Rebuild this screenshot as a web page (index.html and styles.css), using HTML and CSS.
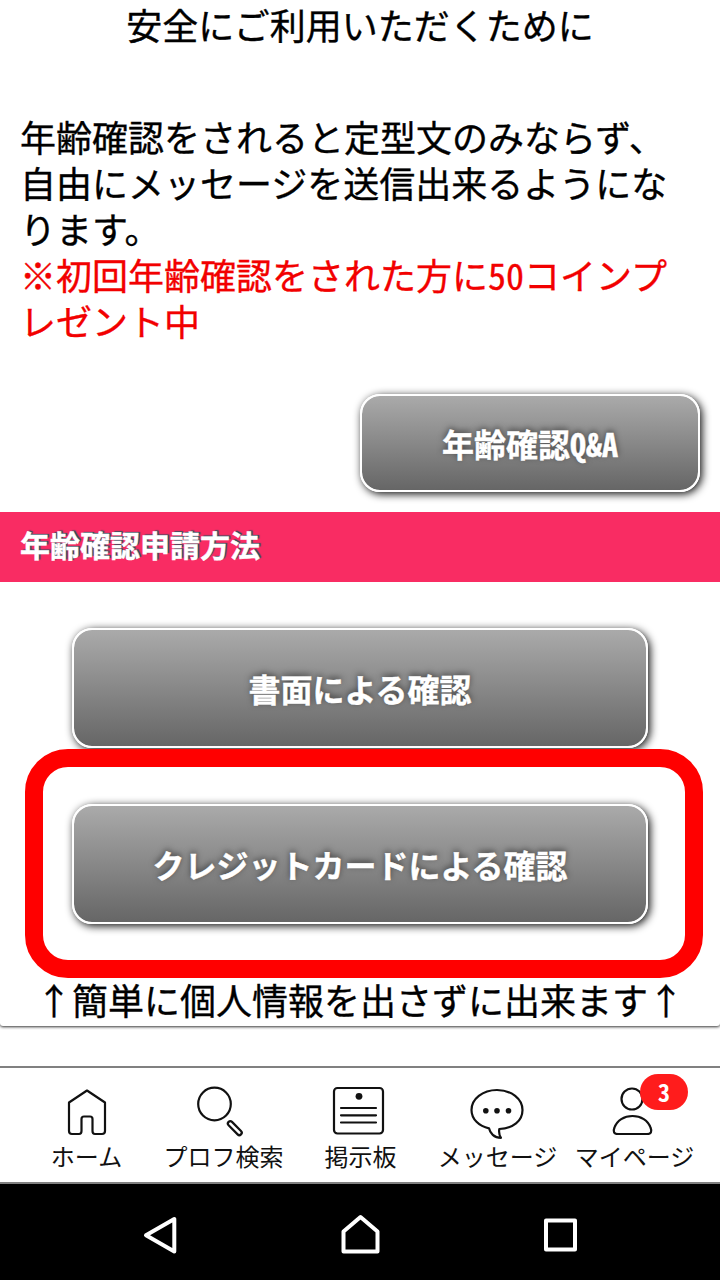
FILE: index.html
```html
<!DOCTYPE html>
<html lang="ja">
<head>
<meta charset="utf-8">
<title>年齢確認</title>
<link rel="stylesheet" href="styles.css">
</head>
<body>
<div class="screen">
  <main class="content">
    <h1 class="title">安全にご利用いただくために</h1>
    <p class="intro">年齢確認をされると定型文のみならず、自由にメッセージを送信出来るようになります。<br><span class="notice">※初回年齢確認をされた方に50コインプレゼント中</span></p>
    <div class="qa-row"><a class="button button-qa">年齢確認Q&amp;A</a></div>
    <h2 class="section">年齢確認申請方法</h2>
    <a class="button button-wide">書面による確認</a>
    <div class="highlight"><a class="button button-card">クレジットカードによる確認</a></div>
    <p class="caption">↑簡単に個人情報を出さずに出来ます↑</p>
  </main>
  <nav class="tabs">
    <a class="tab">
      <svg class="icon" viewBox="0 0 60 56"><path d="M30 9.500 48 21.500V50Q48 53 45 53H38Q35.500 53 35.500 50V38Q35.500 35.500 33 35.500H27Q24.500 35.500 24.500 38V50Q24.500 53 22 53H15Q12 53 12 50V21.500Z"/></svg>
      <span>ホーム</span>
    </a>
    <a class="tab">
      <svg class="icon" viewBox="0 0 60 56"><circle cx="20.500" cy="23" r="16.300"/><path d="M34.600 44.300A2.400 2.400 0 0 1 38 40.900L47 50A2.400 2.400 0 0 1 43.600 53.400Z"/></svg>
      <span>プロフ検索</span>
    </a>
    <a class="tab">
      <svg class="icon" viewBox="0 0 60 56"><rect x="3" y="7" width="49" height="45.500" rx="3.500"/><path d="M10 27H45M10 34.300H45M10 41.500H45"/><circle class="dot" cx="28" cy="15.300" r="3.400"/></svg>
      <span>掲示板</span>
    </a>
    <a class="tab">
      <svg class="icon" viewBox="0 0 60 56"><path d="M29 9C14.500 9 3.500 18 3.500 29C3.500 38 11 45.500 21 47.300C22 52 26 56.800 33 56.800C31 54 30.800 51 31.300 48C45 47.500 54.500 40 54.500 29C54.500 18 43.500 9 29 9Z"/><circle class="dot" cx="17.800" cy="29.800" r="2.800"/><circle class="dot" cx="29" cy="29.800" r="2.800"/><circle class="dot" cx="40.500" cy="29.800" r="2.800"/></svg>
      <span>メッセージ</span>
    </a>
    <a class="tab">
      <svg class="icon" viewBox="0 0 60 56"><circle cx="27" cy="18" r="10.500"/><path d="M13 53C8.500 53 8 50 9.500 46.500C12 39.500 19 35 27.500 35S43 39.500 45.500 46.500C47 50 46.500 53 42 53Z"/></svg>
      <span>マイページ</span>
      <b class="badge">3</b>
    </a>
  </nav>
  <footer class="system">
    <svg class="key" viewBox="0 0 44 44"><path d="M36.300 6V38.500L8 22.200Z"/></svg>
    <svg class="key" viewBox="0 0 44 44"><path d="M22.500 4 39.500 18.500V38.500H5.500V18.500Z"/></svg>
    <svg class="key" viewBox="0 0 44 44"><path d="M8 7.500H37V36.500H8Z"/></svg>
  </footer>
</div>
</body>
</html>
```
FILE: styles.css
```css
* { box-sizing: border-box; }
body {
  margin: 0;
  background: #fff;
  color: #000;
  font-family: "Noto Sans CJK JP", sans-serif;
  font-feature-settings: "hwid";
  font-size: 36px;
  line-height: 46px;
}
.screen { display: flex; flex-direction: column; width: 720px; height: 1280px; overflow: hidden; }
.content {
  display: flex;
  flex-direction: column;
  height: 1026px;
  border-radius: 0 0 3px 3px;
  box-shadow: 0 1px 3px rgba(0, 0, 0, .8);
}
.title { margin: 1px 0 0; font-size: 36px; font-weight: 400; text-align: center; }
.title, .intro, .caption { -webkit-text-stroke: .35px currentColor; }
.intro { margin: 66px 0 0; padding: 0 20px; }
.notice { color: #f20000; }
.qa-row { display: flex; justify-content: flex-end; margin-top: 51px; padding-right: 20px; }
.button {
  display: flex;
  align-items: center;
  justify-content: center;
  border: 2px solid #fff;
  border-radius: 20px;
  background: linear-gradient(#aaa, #666) padding-box;
  box-shadow: 2px 2px 8px rgba(0, 0, 0, .95);
  color: #fff;
  font-size: 32px;
  font-weight: 700;
  text-shadow: 0 -2px 6px rgba(0, 0, 0, .55);
  -webkit-text-stroke: .4px #fff;
}
.button-qa { width: 340px; height: 98px; }
.section {
  height: 70px;
  margin: 20px 0 0;
  padding-left: 20px;
  background: #f92c63;
  color: #fff;
  font-size: 30px;
  line-height: 65px;
  text-shadow: 2px -1px 1px #245060;
  -webkit-text-stroke: .4px #fff;
}
.button-wide { flex: none; height: 120px; margin: 46px 72px 0; }
.highlight {
  position: relative;
  flex: none;
  height: 229px;
  margin: 1px 17px 0 25px;
  padding: 37px 37px 0 29px;
  border: 18px solid #f00;
  border-radius: 43px;
}
.button-card { height: 120px; }
.caption { margin: -2px 0 0; text-align: center; }
.tabs {
  display: flex;
  flex: none;
  height: 118px;
  margin-top: 40px;
  padding: 0 17px 0 18px;
  border: solid #808080;
  border-width: 2px 0;
}
.tab {
  position: relative;
  display: flex;
  flex: 1;
  flex-direction: column;
  align-items: center;
  gap: 1px;
  padding-top: 13px;
  color: #111;
  font-size: 24px;
  line-height: 35px;
  white-space: nowrap;
}
.icon { width: 60px; height: 56px; overflow: visible; fill: none; stroke: #111; stroke-width: 2.2; stroke-linejoin: round; stroke-linecap: round; }
.icon .dot { fill: #111; stroke: none; }
.badge {
  position: absolute;
  top: 6px;
  right: 15px;
  width: 48px;
  height: 36px;
  border-radius: 18px;
  background: #ff1c1c;
  color: #fff;
  text-align: center;
}
.system { display: flex; flex: 1; align-items: center; justify-content: space-between; padding: 6px 138px 0; background: #000; }
.key { width: 44px; height: 44px; fill: none; stroke: #fff; stroke-width: 4; stroke-linejoin: round; }
```
